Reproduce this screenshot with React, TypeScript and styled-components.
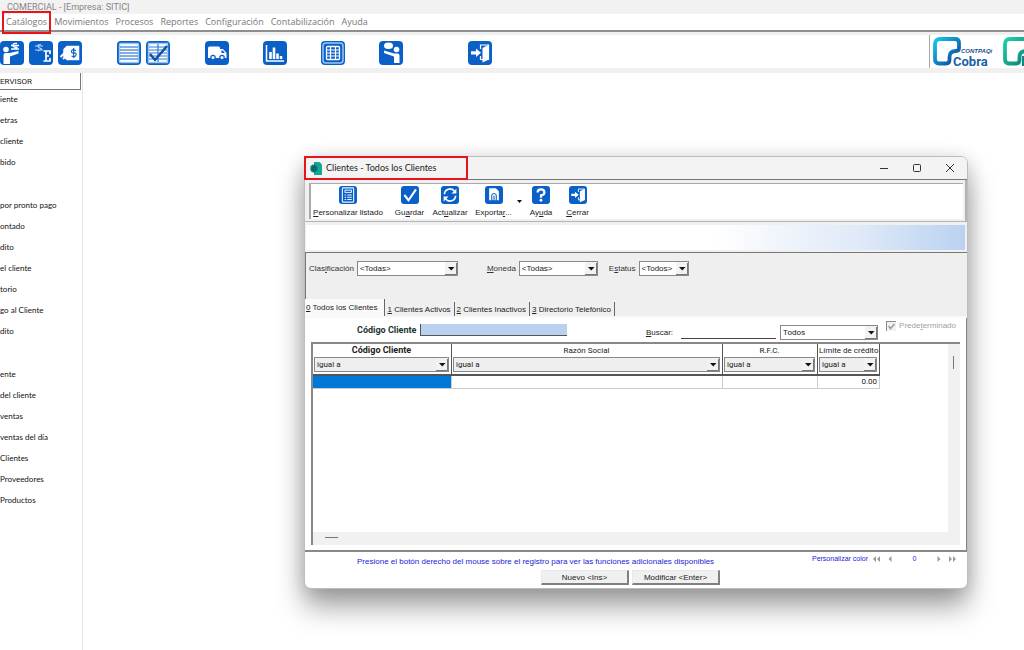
import React from 'react';
import styled, { createGlobalStyle, css } from 'styled-components';

const SYSTEM = 'Roboto, "Liberation Sans", Arial, sans-serif';
const UI = 'Lato, "Open Sans", sans-serif';
const MENU = '"Open Sans", "Noto Sans", sans-serif';
const PLAIN = '"Liberation Sans", Arial, sans-serif';
const BLUE = '#0a60c6';

const GlobalStyle = createGlobalStyle`
  *, *::before, *::after { box-sizing: border-box; }
  body { margin: 0; background: #fff; color: #222; font-family: ${SYSTEM}; font-size: 8px; }
  button, input, select { font: inherit; color: inherit; margin: 0; }
`;

/* ---------- Application frame ---------- */

const Page = styled.div`
  display: flex;
  flex-direction: column;
  min-height: 100vh;
  position: relative;
  overflow: hidden;
`;

const AppTitle = styled.header`
  height: 14px;
  padding-left: 7px;
  background: #f2f2f2;
  color: #868686;
  font: 9px/14px ${SYSTEM};
  white-space: nowrap;
`;

const redFrame = css`
  position: relative;
  &::after {
    content: '';
    position: absolute;
    inset: var(--frame);
    border: 2px solid #e8141c;
    pointer-events: none;
  }
`;

const MenuBar = styled.nav`
  display: flex;
  gap: 7px;
  height: 18px;
  padding-left: 6px;
  border-bottom: 2px solid #8e8e8e;
`;

const MenuItem = styled.button<{ $framed?: boolean }>`
  border: 0;
  padding: 0;
  background: none;
  color: #777;
  font: 9px/16px ${MENU};
  --frame: -3px -4px -4px -4px;
  ${p => p.$framed && redFrame}
`;

const Toolbar = styled.div`
  display: flex;
  align-items: flex-end;
  gap: 35px;
  height: 41px;
  border: solid #f0f0f0;
  border-width: 3px 0 5px;
`;

const ToolGroup = styled.div<{ $gap?: number; $push?: number }>`
  display: flex;
  gap: ${p => p.$gap ?? 5}px;
  margin-left: ${p => p.$push ?? 0}px;
  padding-bottom: 3px;
`;

const IconButton = styled.button`
  width: 24px;
  height: 24px;
  padding: 0;
  border: 0;
  background: none;
  svg { display: block; }
`;

const Brands = styled.div`
  display: flex;
  flex: 0 0 95px;
  gap: 10px;
  height: 33px;
  margin-left: auto;
  padding: 2px 0 0 3px;
  border-left: 1px solid #aaa;
  overflow: hidden;
  svg { flex: none; }
`;

const Body = styled.div`
  display: flex;
  flex: 1;
`;

const Sidebar = styled.aside`
  flex: 0 0 83px;
  border-right: 1px solid #e6e6e6;
  overflow: hidden;
  white-space: nowrap;
`;

const UserName = styled.div`
  height: 17px;
  margin-right: 1px;
  border: solid #777;
  border-width: 0 1px 1px 0;
  font-size: 8px;
  line-height: 17px;
`;

const SideList = styled.ul`
  list-style: none;
  margin: 0 0 22px;
  padding: 0;
  li { height: 21px; line-height: 18px; }
`;

const SideLink = styled.a`
  color: #111;
  font-family: ${UI};
  text-decoration: none;
`;

/* ---------- Clients window ---------- */

const Window = styled.section`
  position: absolute;
  top: 156px;
  left: 304px;
  right: 56px;
  display: flex;
  flex-direction: column;
  border: 1px solid #bdbdbd;
  border-radius: 7px;
  background: #fff;
  box-shadow: 0 18px 28px rgba(0, 0, 0, 0.36), 0 2px 18px rgba(0, 0, 0, 0.14);
`;

const WindowBar = styled.div`
  display: flex;
  justify-content: space-between;
  height: 23px;
  background: #f3f3f3;
  border-bottom: 1px solid #777;
  border-radius: 6px 6px 0 0;
`;

const WindowTitle = styled.h1`
  display: flex;
  align-items: center;
  gap: 3px;
  width: 163px;
  margin: 0;
  padding-left: 5px;
  color: #222;
  font: 9px/22px ${UI};
  white-space: nowrap;
  --frame: -1px 0 -1px -1px;
  ${redFrame}
`;

const WindowButtons = styled.div`
  display: flex;
  padding-right: 1px;
`;

const WindowButton = styled.button`
  display: grid;
  place-items: center;
  width: 33px;
  padding: 0;
  border: 0;
  background: none;
`;

const ActionPanel = styled.div`
  padding: 3px 2px 2px 4px;
  background: #f0f0f0;
  border: solid #b4b4b4;
  border-width: 0 2px 1px 0;
`;

const Actions = styled.div`
  display: flex;
  gap: 6px;
  height: 36px;
  background: #fff;
  border: solid #aaa;
  border-width: 1px 0 0 2px;
`;

const ActionGroup = styled.div`
  display: flex;
`;

const Action = styled.button<{ $w: number }>`
  display: flex;
  flex-direction: column;
  align-items: center;
  gap: 3px;
  width: ${p => p.$w}px;
  padding: 2px 0 0;
  border: 0;
  background: none;
  font: 8px/12px ${PLAIN};
  white-space: nowrap;
`;

const MoreButton = styled.button`
  width: 8px;
  padding: 0;
  border: 0;
  background: none;
  svg { display: block; margin: auto; }
`;

const Banner = styled.div`
  height: 30px;
  border: solid #f0f0f0;
  border-width: 3px 2px 2px 1px;
  background: linear-gradient(90deg, #fff 62%, #dfe9f8 84%, #bad2f1 100%);
`;

const Filters = styled.div`
  display: flex;
  align-items: flex-start;
  height: 48px;
  padding: 8px 3px 0;
  background: #efefef;
  border: solid #777;
  border-width: 1px 0 0 1px;
`;

const Field = styled.label<{ $after?: number }>`
  display: flex;
  align-items: center;
  gap: 3px;
  margin-right: ${p => p.$after ?? 0}px;
  color: #333;
  font: 8px/15px ${PLAIN};
  white-space: nowrap;
`;

const ComboBox = styled.span<{ $w?: number; $grey?: boolean }>`
  position: relative;
  display: block;
  width: ${p => (p.$w ? p.$w + 'px' : 'auto')};
  height: 15px;
  background: ${p => (p.$grey ? '#efefef' : '#fff')};
  border: 1px solid #888;
  select {
    display: block;
    appearance: none;
    width: 100%;
    height: 13px;
    padding: 0 14px 0 2px;
    border: 0;
    border-radius: 0;
    background: none;
    color: #222;
    line-height: 13px;
  }
  svg {
    position: absolute;
    top: 0;
    right: 0;
    pointer-events: none;
  }
`;

const Tabs = styled.div`
  display: flex;
  align-items: flex-end;
  height: 18px;
  background: #efefef;
  border-bottom: 2px solid #f8f8f8;
`;

const Tab = styled.button<{ $active?: boolean }>`
  height: ${p => (p.$active ? 17 : 14)}px;
  padding: ${p => (p.$active ? '0 7px 1px 1px' : '1px 3px 0 2px')};
  border: 0;
  border-right: 1px solid #666;
  background: ${p => (p.$active ? '#fafafa' : 'none')};
  color: #222;
  font: 8px/13px ${PLAIN};
  white-space: nowrap;
`;

const Sheet = styled.div`
  padding: 0 6px;
  border: solid #888;
  border-width: 0 1px 2px 0;
`;

const SearchRow = styled.div`
  display: flex;
  align-items: flex-start;
  height: 24px;
  padding-right: 4px;
`;

const CodeField = styled.label`
  display: flex;
  align-items: center;
  gap: 4px;
  margin: 6px auto 0 46px;
  font: bold 9px/12px ${SYSTEM};
  color: #233;
  white-space: nowrap;
  input {
    width: 147px;
    height: 12px;
    padding: 0 2px;
    border: solid #555;
    border-width: 0 0 1px 1px;
    background: #b9d0f0;
  }
`;

const SearchField = styled.label`
  display: flex;
  gap: 8px;
  margin: 8px 4px 0 0;
  font: 8px/14px ${PLAIN};
  input {
    width: 95px;
    height: 13px;
    padding: 0;
    border: 0;
    border-bottom: 1px solid #444;
    background: none;
  }
`;

const ScopeBox = styled.div`
  margin: 7px 8px 0 0;
`;

const CheckField = styled.label`
  display: flex;
  align-items: center;
  gap: 3px;
  margin-top: 2px;
  color: #a2a2a2;
  font: 8px/12px ${PLAIN};
  white-space: nowrap;
  input {
    appearance: none;
    width: 10px;
    height: 10px;
    border: solid #8c8c8c;
    border-width: 1px 0 0 1px;
    background: #f0f0f0;
  }
  svg { position: absolute; }
`;

const CheckMark = styled.span`
  position: relative;
  display: flex;
  svg { top: 2px; left: 2px; }
`;

const Grid = styled.div`
  display: grid;
  grid-template-columns: 1fr 12px;
  grid-template-rows: 188px 13px;
  margin-bottom: 5px;
  border: solid #888;
  border-width: 2px 0 0 2px;
`;

const Records = styled.table`
  align-self: start;
  justify-self: start;
  width: 567px;
  border-collapse: separate;
  border-spacing: 0;
  table-layout: fixed;
  th {
    height: 32px;
    padding: 0 2px 2px 1px;
    border: solid #555;
    border-width: 0 1px 2px 0;
    color: #222;
    font-weight: normal;
    line-height: 13px;
    white-space: nowrap;
  }
  th:first-child { font: bold 9px/13px ${SYSTEM}; }
  th select { font: 8px/13px ${SYSTEM}; }
  td {
    height: 13px;
    padding: 0 2px;
    border: solid #ccc;
    border-width: 0 1px 1px 0;
    line-height: 12px;
    text-align: right;
  }
`;

const SelectedCell = styled.td`
  background: #0078d7;
`;

const VerticalTrack = styled.div`
  grid-row: 1 / 3;
  grid-column: 2;
  padding: 12px 5px;
  background: #f1f1f1;
  &::before { content: ''; display: block; width: 1px; height: 13px; background: #777; }
`;

const HorizontalTrack = styled.div`
  padding: 5px 12px;
  background: #f1f1f1;
  &::before { content: ''; display: block; width: 13px; height: 1px; background: #777; }
`;

const Footer = styled.footer`
  display: grid;
  grid-template-columns: 1fr auto;
  padding: 2px 7px 3px 52px;
  color: #2222d8;
`;

const Hint = styled.p`
  margin: 0;
  padding-top: 1px;
  font: 8px/14px ${PLAIN};
  white-space: nowrap;
`;

const Pager = styled.div`
  display: flex;
  align-items: center;
  height: 10px;
  font: 7px/10px ${PLAIN};
  white-space: nowrap;
  button { display: block; width: 14px; height: 10px; padding: 0; border: 0; background: none; }
  a { margin-right: 1px; color: inherit; text-decoration: none; }
  output { width: 35px; text-align: center; }
  svg { display: block; margin: auto; }
`;

const FormButtons = styled.div`
  grid-column: 1 / 3;
  display: flex;
  gap: 3px;
  padding: 1px 0 0 184px;
`;

const FormButton = styled.button`
  width: 88px;
  height: 15px;
  padding: 0;
  border: solid;
  border-width: 1px 2px 2px 1px;
  border-color: #e8e8e8 #808080 #808080 #e8e8e8;
  background: #f0f0f0;
  color: #222;
  font: 8px/11px ${PLAIN};
`;

/* ---------- Icons ---------- */

const Tile = ({ size = 24, children }: { size?: number; children: React.ReactNode }) => (
  <svg width={size} height={size} viewBox="0 0 24 24" fill="none" stroke="#fff" strokeWidth="1.5">
    <rect width="24" height="24" rx="4" fill={BLUE} stroke="none" />
    {children}
  </svg>
);

const topIcons: Record<string, React.ReactNode> = {
  cliente: (
    <>
      <circle cx="6" cy="8.500" r="2.800" fill="#fff" stroke="none" />
      <path d="M3.500 23V14q0-2 2-2h4l9-2v2.500L10 15.500V23z" fill="#fff" stroke="none" />
      <path d="M11 4.500h8M11 8h8M17 2.500q-4-.500-4 1.700t3 2-3 2.300" strokeWidth="1.300" />
    </>
  ),
  egreso: (
    <>
      <path d="M6 5h8M6 9h8M12 3.500q-4 0-3 2t3 2-3 2.500" strokeWidth="1.200" stroke="#b9d4f4" />
      <path d="M14.500 10h6.500v3M14.500 20h6.500v-3M17 10v10M17 15h3" strokeWidth="1.700" />
    </>
  ),
  etiqueta: (
    <>
      <path d="M9 5.500h11.500v13H9l-3-3v-7z" fill="#fff" />
      <path d="M2.500 16l5-5M5 18l3-3" strokeWidth="1.800" />
      <path d="M18 9.500q-4.500-1.500-4.500.800t2.500 1.700 2 2-4.500 1M15.700 7v10" stroke={BLUE} strokeWidth="1.200" />
    </>
  ),
  lista: (
    <>
      <rect x="2.500" y="2.500" width="19" height="19" rx="1" fill="#fff" stroke="#9cc7f3" />
      <path d="M3 6h18M3 9h18M3 12h18M3 15h18M3 18h18" stroke={BLUE} strokeWidth="1.100" />
    </>
  ),
  revision: (
    <>
      <rect x="2.500" y="2.500" width="19" height="19" fill="#fff" stroke="#9cc7f3" />
      <path d="M3 6h18M3 9h18M3 12h18M3 15h18M3 18h18M12 3v18" stroke="#2f7bd2" strokeWidth="1.200" />
      <path d="M4 13l5 6L21 5" stroke="#0b4ea2" strokeWidth="2.400" />
    </>
  ),
  camion: (
    <>
      <path d="M4.500 5.500h9q1.500 0 1.500 1.500v1h3l3.500 4v5H3V7q0-1.500 1.500-1.500z" fill="#fff" stroke="none" />
      <circle cx="8" cy="16.500" r="2.200" fill="#fff" stroke={BLUE} strokeWidth="1.200" />
      <circle cx="17" cy="16.500" r="2.200" fill="#fff" stroke={BLUE} strokeWidth="1.200" />
      <path d="M16.500 9.500h1.500l1.800 2.500h-3.300z" fill={BLUE} stroke="none" />
    </>
  ),
  grafica: (
    <>
      <path d="M3.500 4v16h17.500" />
      <path d="M7.500 18v-7M11 18V6.500M14.500 18v-5.500M18 18v-3" strokeWidth="2.600" />
    </>
  ),
  tabla: (
    <>
      <rect x="2" y="2" width="20" height="20" rx="3" stroke="#9cc7f3" />
      <rect x="5.500" y="5.500" width="13" height="13" rx="1" strokeWidth="1.300" />
      <path d="M5 9h14M5 12h14M5 15h14M9.500 6v12M14.500 6v12" strokeWidth="1.200" />
    </>
  ),
  asesor: (
    <>
      <ellipse cx="9.500" cy="4.800" rx="4.500" ry="3.200" fill="#fff" stroke="none" />
      <circle cx="17.500" cy="8.500" r="2.800" fill="#fff" stroke="none" />
      <path d="M5 9.500l10 3h3.500q2 0 2 2V22H15v-6.500L5 12z" fill="#fff" stroke="none" />
    </>
  ),
  salida: (
    <>
      <path d="M12.500 8V4h8v14.500h-8V15" strokeWidth="1.200" />
      <path d="M14.500 7l6.500-3.500v15l-6.500 3z" fill="#fff" stroke="none" />
      <path d="M3 10.200h5V7.500l5 4.300-5 4.300v-2.700H3z" fill="#fff" stroke="none" />
    </>
  ),
  listado: (
    <>
      <rect x="4.500" y="2.500" width="15" height="19" rx="1" stroke="#e7f2fd" />
      <rect x="8" y="5.500" width="8.500" height="3" strokeWidth="1.200" />
      <path d="M7.500 12h2M11 12h6M7.500 15h2M11 15h6M7.500 18h2M11 18h6" strokeWidth="1.300" />
    </>
  ),
  guardar: <path d="M4.500 12l5.500 7L20 4.500" strokeWidth="2.800" />,
  actualizar: (
    <>
      <path d="M4.500 11a7.500 7.500 0 0 1 13.500-4M19.500 13A7.500 7.500 0 0 1 6 17" strokeWidth="2.200" />
      <path d="M20.500 3.500V10H14zM3.500 20.500V14H10z" fill="#fff" stroke="none" />
    </>
  ),
  exportar: (
    <>
      <path d="M5.500 3h9l4 4v12h-13z" fill="#fff" stroke="none" />
      <path d="M9 20v-8q3-4 6 0v8M12 21v-8" stroke={BLUE} strokeWidth="1.400" />
    </>
  ),
  ayuda: (
    <>
      <path d="M7.500 8.500q0-4 4.500-4t4.500 3.700-4.500 4.300v3" strokeWidth="3" />
      <circle cx="12" cy="19" r="1.900" fill="#fff" stroke="none" />
    </>
  ),
};

const Caret = () => (
  <svg width="12" height="13" viewBox="0 0 12 13">
    <rect x="0" y="0" width="12" height="13" fill="#f2f2f2" />
    <path d="M0 12.500h11.500V1" fill="none" stroke="#777" />
    <path d="M3 5h6.500L6.250 8.500z" fill="#111" />
  </svg>
);

const markPath =
  'M13 26.500H6q-4 0-4-4V7q0-5 5-5h15q4 0 4 4v5q0 3-3 3-6.500 0-6.500 6v3q0 3.500-3.500 3.500z';

const Mark = ({ id, from, to }: { id: string; from: string; to: string }) => (
  <>
    <defs>
      <linearGradient id={id} x1="0" y1="0" x2="1" y2="1">
        <stop offset="0" stopColor={from} />
        <stop offset="1" stopColor={to} />
      </linearGradient>
    </defs>
    <path d={markPath} fill="none" stroke={`url(#${id})`} strokeWidth="3.800" />
  </>
);

/* ---------- Content ---------- */

const menu = ['Catálogos', 'Movimientos', 'Procesos', 'Reportes', 'Configuración', 'Contabilización', 'Ayuda'];

const toolGroups = [
  { gap: 5, push: 0, icons: ['cliente', 'egreso', 'etiqueta'] },
  { gap: 5, push: 0, icons: ['lista', 'revision'] },
  { gap: 34, push: 0, icons: ['camion', 'grafica', 'tabla', 'asesor'] },
  { gap: 5, push: 30, icons: ['salida'] },
];

const sideLinks = [
  ['iente', 'etras', 'cliente', 'bido'],
  ['por pronto pago', 'ontado', 'dito', 'el cliente', 'torio', 'go al Cliente', 'dito'],
  ['ente', 'del cliente', 'ventas', 'ventas del día', 'Clientes', 'Proveedores', 'Productos'],
];

const columns = [
  { name: 'Código Cliente', width: 139 },
  { name: 'Razón Social', width: 271 },
  { name: 'R.F.C.', width: 95 },
  { name: 'Límite de crédito', width: 62 },
];

const Combo = ({ value, width, grey, label }: { value: string; width?: number; grey?: boolean; label?: string }) => (
  <ComboBox $w={width} $grey={grey}>
    <select aria-label={label} defaultValue={value}>
      <option>{value}</option>
    </select>
    <Caret />
  </ComboBox>
);

const Arrow = ({ double, back }: { double?: boolean; back?: boolean }) => (
  <svg width="8" height="6" viewBox="0 0 8 6" fill="#999">
    {back ? (
      <path d={double ? 'M4 0v6L1 3zM8 0v6L5 3z' : 'M5.500 0v6L2.500 3z'} />
    ) : (
      <path d={double ? 'M0 0v6l3-3zM4 0v6l3-3z' : 'M2.500 0v6l3-3z'} />
    )}
  </svg>
);

export default function App() {
  return (
    <Page>
      <GlobalStyle />
      <AppTitle>COMERCIAL - [Empresa: SITIC]</AppTitle>
      <MenuBar>
        {menu.map((name, i) => (
          <MenuItem key={name} $framed={i === 0}>{name}</MenuItem>
        ))}
      </MenuBar>
      <Toolbar>
        {toolGroups.map(group => (
          <ToolGroup key={group.icons[0]} $gap={group.gap} $push={group.push}>
            {group.icons.map(icon => (
              <IconButton key={icon} aria-label={icon}>
                <Tile>{topIcons[icon]}</Tile>
              </IconButton>
            ))}
          </ToolGroup>
        ))}
        <Brands>
          <svg width="60" height="31" viewBox="0 0 60 31">
            <Mark id="cobra" from="#12c8ee" to="#0b3f94" />
            <text x="28" y="16" fontFamily="Liberation Sans" fontSize="6" fontWeight="bold" fontStyle="italic" fill="#174f93">CONTPAQi</text>
            <text x="20" y="29" fontFamily="Roboto" fontSize="13" fontWeight="bold" fill="#1a5fa8">Cobra</text>
          </svg>
          <svg width="60" height="31" viewBox="0 0 60 31">
            <Mark id="second" from="#1fd0a8" to="#0a7c78" />
            <path d="M20 19v10" stroke="#0a8a80" strokeWidth="2" />
          </svg>
        </Brands>
      </Toolbar>

      <Body>
        <Sidebar>
          <UserName>ERVISOR</UserName>
          {sideLinks.map((links, g) => (
            <SideList key={g}>
              {links.map((text, i) => (
                <li key={i}><SideLink href="#">{text}</SideLink></li>
              ))}
            </SideList>
          ))}
        </Sidebar>
      </Body>

      <Window aria-label="Clientes">
        <WindowBar>
          <WindowTitle>
            <svg width="13" height="13" viewBox="0 0 13 13">
              <path d="M4 0h5.500L12 2.500V13H4z" fill="#14a797" />
              <ellipse cx="4" cy="6.500" rx="3.700" ry="4" fill="#087a75" />
              <circle cx="4" cy="6.500" r="1.700" fill="none" stroke="#0b5552" />
            </svg>
            Clientes - Todos los Clientes
          </WindowTitle>
          <WindowButtons>
            <WindowButton aria-label="Minimizar">
              <svg width="8" height="8" stroke="#333"><path d="M0 4.500h8" /></svg>
            </WindowButton>
            <WindowButton aria-label="Maximizar">
              <svg width="8" height="8" stroke="#333" fill="none"><rect x="0.500" y="0.500" width="7" height="7" rx="1" /></svg>
            </WindowButton>
            <WindowButton aria-label="Cerrar ventana">
              <svg width="8" height="8" stroke="#333"><path d="M0 0l8 8M8 0L0 8" /></svg>
            </WindowButton>
          </WindowButtons>
        </WindowBar>

        <ActionPanel>
          <Actions>
            <ActionGroup>
              <Action $w={74}><Tile size={18}>{topIcons.listado}</Tile><span><u>P</u>ersonalizar listado</span></Action>
            </ActionGroup>
            <ActionGroup>
              <Action $w={37}><Tile size={18}>{topIcons.guardar}</Tile><span>Gu<u>a</u>rdar</span></Action>
              <Action $w={44}><Tile size={18}>{topIcons.actualizar}</Tile><span>Act<u>u</u>alizar</span></Action>
              <Action $w={43}><Tile size={18}>{topIcons.exportar}</Tile><span>Exporta<u>r</u>...</span></Action>
              <MoreButton aria-label="Más formatos">
                <svg width="5" height="3"><path d="M0 0h5L2.500 3z" fill="#111" /></svg>
              </MoreButton>
              <Action $w={36}><Tile size={18}>{topIcons.ayuda}</Tile><span>Ay<u>u</u>da</span></Action>
              <Action $w={37}><Tile size={18}>{topIcons.salida}</Tile><span><u>C</u>errar</span></Action>
            </ActionGroup>
          </Actions>
        </ActionPanel>

        <Banner />

        <Filters>
          <Field $after={29}><span>Clas<u>i</u>ficación</span><Combo value="<Todas>" width={101} /></Field>
          <Field $after={11}><span><u>M</u>oneda</span><Combo value="<Todas>" width={79} /></Field>
          <Field><span>E<u>s</u>tatus</span><Combo value="<Todos>" width={50} /></Field>
        </Filters>

        <Tabs>
          <Tab $active><u>0</u> Todos los Clientes</Tab>
          <Tab><u>1</u> Clientes Activos</Tab>
          <Tab><u>2</u> Clientes Inactivos</Tab>
          <Tab><u>3</u> Directorio Telefónico</Tab>
        </Tabs>

        <Sheet>
          <SearchRow>
            <CodeField>Código Cliente <input type="text" /></CodeField>
            <SearchField><span><u>B</u>uscar:</span><input type="text" /></SearchField>
            <ScopeBox><Combo value="Todos" width={98} label="Buscar en" /></ScopeBox>
            <CheckField>
              <CheckMark>
                <input type="checkbox" defaultChecked disabled />
                <svg width="7" height="7" fill="none" stroke="#999" strokeWidth="1.500"><path d="M0.500 3l2 2.500L6.500 1" /></svg>
              </CheckMark>
              <span>Prede<u>t</u>erminado</span>
            </CheckField>
          </SearchRow>

          <Grid>
            <Records>
              <colgroup>
                {columns.map(c => <col key={c.name} width={c.width} />)}
              </colgroup>
              <thead>
                <tr>
                  {columns.map(c => (
                    <th key={c.name} scope="col">
                      {c.name}
                      <Combo value="igual a" grey label={`Filtro de ${c.name}`} />
                    </th>
                  ))}
                </tr>
              </thead>
              <tbody>
                <tr><SelectedCell /><td /><td /><td>0.00</td></tr>
              </tbody>
            </Records>
            <VerticalTrack />
            <HorizontalTrack />
          </Grid>
        </Sheet>

        <Footer>
          <Hint>Presione el botón derecho del mouse sobre el registro para ver las funciones adicionales disponibles</Hint>
          <Pager>
            <a href="#">Personalizar color</a>
            <button aria-label="Primero"><Arrow double back /></button>
            <button aria-label="Anterior"><Arrow back /></button>
            <output>0</output>
            <button aria-label="Siguiente"><Arrow /></button>
            <button aria-label="Último"><Arrow double /></button>
          </Pager>
          <FormButtons>
            <FormButton>Nuevo &lt;Ins&gt;</FormButton>
            <FormButton>Modificar &lt;Enter&gt;</FormButton>
          </FormButtons>
        </Footer>
      </Window>
    </Page>
  );
}
